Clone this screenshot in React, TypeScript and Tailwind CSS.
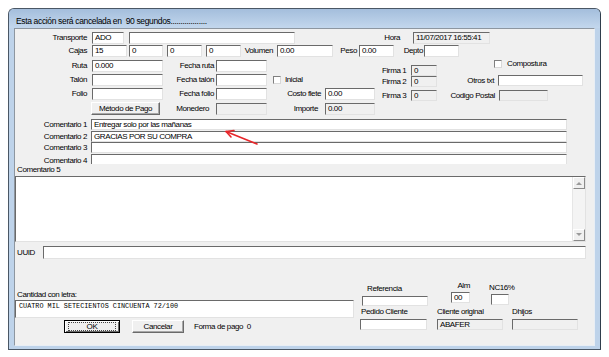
import React from "react";

const inpBase =
  "border border-t-[#6a6a6a] border-l-[#6a6a6a] border-r-[#e2e2e2] border-b-[#e2e2e2] flex items-center pl-[2px] overflow-hidden whitespace-nowrap shrink-0";

function Inp({ c, gray, children }: { c: string; gray?: boolean; children?: React.ReactNode }) {
  return <div className={`${inpBase} ${gray ? "bg-[#f0f0f0]" : "bg-white"} ${c}`}>{children}</div>;
}

function Lbl({ c, children }: { c: string; children?: React.ReactNode }) {
  return <div className={`flex items-center whitespace-nowrap shrink-0 ${c}`}>{children}</div>;
}

function Check({ c }: { c: string }) {
  return (
    <div
      className={`w-[8px] h-[8px] bg-white border border-t-[#808080] border-l-[#808080] border-r-[#d8d8d8] border-b-[#d8d8d8] shrink-0 ${c}`}
    />
  );
}

function Btn({ c, children, def }: { c: string; children: React.ReactNode; def?: boolean }) {
  if (def) {
    return (
      <div
        className={`relative border border-black bg-[#f0f0f0] shadow-[inset_1px_1px_0_#ffffff,inset_-1px_-1px_0_#6a6a6a] flex items-center justify-center shrink-0 ${c}`}
      >
        <div className="absolute top-[1px] bottom-[1px] left-[3px] right-[3px] border border-dotted border-[#444]" />
        <span className="relative">{children}</span>
      </div>
    );
  }
  return (
    <div
      className={`bg-[#f0f0f0] border border-t-white border-l-white border-r-[#6a6a6a] border-b-[#6a6a6a] shadow-[inset_-1px_-1px_0_#a8a8a8] flex items-center justify-center shrink-0 ${c}`}
    >
      {children}
    </div>
  );
}

function ScrollBtn({ up }: { up?: boolean }) {
  return (
    <div className="w-[12px] h-[12px] bg-[#f0f0f0] border border-t-white border-l-white border-r-[#8a8a8a] border-b-[#8a8a8a] flex items-center justify-center">
      <svg width="6" height="4" viewBox="0 0 6 4">
        {up ? <path d="M0 4 L3 1 L6 4 Z" fill="#9a9a9a" /> : <path d="M0 0 L3 3 L6 0 Z" fill="#9a9a9a" />}
      </svg>
    </div>
  );
}

export default function App() {
  return (
    <div className="relative w-[609px] h-[357px] bg-white overflow-hidden pt-[8px] pl-[8px] font-['Liberation_Sans',Arial,sans-serif] text-[8px] tracking-[-0.4px] leading-none text-black">
      {/* window */}
      <div className="w-[593px] h-[342px] flex flex-col rounded-t-[6px] border border-[#4a5765] border-r-[#2f3e4c] bg-[#bed3ea] overflow-hidden">
        {/* title */}
        <div className="h-[19px] shrink-0 bg-linear-to-b from-[#a4bedc] to-[#c3d7ed] flex items-end pl-[7px] pb-[3px] text-[8.5px] tracking-[-0.35px]">
          Esta acción será cancelada en&nbsp; 90 segundos..................
        </div>
        {/* frame body */}
        <div className="flex-1 px-[5px] pb-[3px] flex">
          <div className="w-[581px] h-[318px] bg-[#f0f0f0] border border-t-[#8d96a0] border-l-[#8d96a0] border-r-[#e8eef5] border-b-[#e8eef5] flex flex-col">
            {/* Row 1 */}
            <div className="mt-[3px] h-[12px] flex items-center">
              <Lbl c="w-[72px] justify-end">Transporte</Lbl>
              <Inp c="ml-[5px] w-[32px] h-[12px]">ADO</Inp>
              <Inp c="ml-[5px] w-[166px] h-[12px]" />
              <Lbl c="w-[105px] justify-end">Hora</Lbl>
              <Inp gray c="ml-[13px] w-[77px] h-[12px]">11/07/2017 16:55:41</Inp>
            </div>
            {/* Row 2 */}
            <div className="mt-[1px] h-[12px] flex items-center">
              <Lbl c="w-[72px] justify-end">Cajas</Lbl>
              <Inp c="ml-[5px] w-[35px] h-[12px]">15</Inp>
              <Inp c="ml-[2px] w-[34px] h-[12px]">0</Inp>
              <Inp c="ml-[4px] w-[35px] h-[12px]">0</Inp>
              <Inp c="ml-[4px] w-[35px] h-[12px]">0</Inp>
              <Lbl c="w-[32px] justify-end">Volumen</Lbl>
              <Inp c="ml-[4px] w-[56px] h-[12px]">0.00</Inp>
              <Lbl c="w-[24px] justify-end">Peso</Lbl>
              <Inp c="ml-[2px] w-[35px] h-[12px]">0.00</Inp>
              <Lbl c="w-[29px] justify-end">Depto</Lbl>
              <Inp c="ml-[1px] w-[35px] h-[12px]" />
            </div>
            {/* Middle section */}
            <div className="mt-[3px] flex items-start">
              <div className="flex flex-col w-[360px]">
                <div className="h-[12px] flex items-center">
                  <Lbl c="w-[72px] justify-end">Ruta</Lbl>
                  <Inp c="ml-[5px] w-[71px] h-[12px]">0.000</Inp>
                  <Lbl c="w-[51px] justify-end">Fecha ruta</Lbl>
                  <Inp c="ml-[2px] w-[51px] h-[12px]" />
                </div>
                <div className="mt-[2px] h-[12px] flex items-center">
                  <Lbl c="w-[72px] justify-end">Talón</Lbl>
                  <Inp c="ml-[5px] w-[71px] h-[12px]" />
                  <Lbl c="w-[51px] justify-end">Fecha talón</Lbl>
                  <Inp c="ml-[2px] w-[51px] h-[12px]" />
                  <Check c="ml-[6px]" />
                  <Lbl c="ml-[4px]">Inicial</Lbl>
                </div>
                <div className="mt-[2px] h-[12px] flex items-center">
                  <Lbl c="w-[72px] justify-end">Folio</Lbl>
                  <Inp c="ml-[5px] w-[71px] h-[12px]" />
                  <Lbl c="w-[51px] justify-end">Fecha folio</Lbl>
                  <Inp c="ml-[2px] w-[51px] h-[12px]" />
                  <Lbl c="w-[54px] justify-end">Costo flete</Lbl>
                  <Inp c="ml-[4px] w-[50px] h-[12px]">0.00</Inp>
                </div>
                <div className="mt-[2px] h-[13px] flex items-center">
                  <div className="w-[76px] shrink-0" />
                  <Btn c="w-[69px] h-[13px]">Método de Pago</Btn>
                  <Lbl c="w-[49px] justify-end">Monedero</Lbl>
                  <Inp gray c="ml-[7px] w-[51px] h-[12px]" />
                  <Lbl c="w-[51px] justify-end">Importe</Lbl>
                  <Inp gray c="ml-[7px] w-[50px] h-[12px]">0.00</Inp>
                </div>
              </div>
              {/* Firma block */}
              <div className="ml-[7px] mt-[5px] flex flex-col">
                <div className="h-[11px] flex items-center">
                  <Lbl c="w-[28px]">Firma 1</Lbl>
                  <Inp gray c="ml-[1px] w-[26px] h-[11px]">0</Inp>
                </div>
                <div className="h-[11px] flex items-center">
                  <Lbl c="w-[28px]">Firma 2</Lbl>
                  <Inp gray c="ml-[1px] w-[26px] h-[11px]">0</Inp>
                </div>
                <div className="mt-[3px] h-[11px] flex items-center">
                  <Lbl c="w-[28px]">Firma 3</Lbl>
                  <Inp gray c="ml-[1px] w-[26px] h-[11px]">0</Inp>
                </div>
              </div>
              {/* right block */}
              <div className="ml-[14px] flex flex-col">
                <div className="h-[8px] flex items-center">
                  <Check c="ml-[43px]" />
                  <Lbl c="ml-[5px]">Compostura</Lbl>
                </div>
                <div className="mt-[7px] h-[11px] flex items-center">
                  <Lbl c="w-[43px] justify-end">Otros txt</Lbl>
                  <Inp c="ml-[4px] w-[85px] h-[11px]" />
                </div>
                <div className="mt-[4px] h-[11px] flex items-center">
                  <Lbl c="w-[44px] justify-end">Codigo Postal</Lbl>
                  <Inp gray c="ml-[4px] w-[49px] h-[11px]" />
                </div>
              </div>
            </div>
            {/* Comentarios */}
            <div className="mt-[4px] h-[11px] flex items-center">
              <Lbl c="w-[72px] justify-end">Comentario 1</Lbl>
              <Inp c="ml-[4px] w-[476px] h-[11px]">Entregar solo por las mañanas</Inp>
            </div>
            <div className="mt-[1px] h-[11px] flex items-center">
              <Lbl c="w-[72px] justify-end">Comentario 2</Lbl>
              <Inp c="ml-[4px] w-[476px] h-[11px]">GRACIAS POR SU COMPRA</Inp>
            </div>
            <div className="h-[11px] flex items-center">
              <Lbl c="w-[72px] justify-end">Comentario 3</Lbl>
              <Inp c="ml-[4px] w-[476px] h-[11px]" />
            </div>
            <div className="mt-[1px] h-[10px] flex items-start overflow-hidden">
              <Lbl c="w-[72px] h-[11px] justify-end pt-[3px]">Comentario 4</Lbl>
              <Inp c="ml-[4px] w-[476px] h-[11px]" />
            </div>
            <div className="mt-[1px] h-[10px] flex items-center pl-[2px]">Comentario 5</div>
            {/* textarea */}
            <div className="mt-[1px] w-[571px] h-[66px] bg-white border border-t-[#6a6a6a] border-l-[#6a6a6a] border-r-[#e2e2e2] border-b-[#e2e2e2] flex justify-end">
              <div className="w-[13px] h-full bg-[#f4f4f4] border-l border-[#e6e6e6] flex flex-col justify-between">
                <ScrollBtn up />
                <ScrollBtn />
              </div>
            </div>
            {/* UUID */}
            <div className="mt-[4px] h-[13px] flex items-center">
              <Lbl c="w-[28px] pl-[2px]">UUID</Lbl>
              <Inp c="w-[543px] h-[13px]" />
            </div>
            {/* bottom */}
            <div className="mt-[22px] flex items-start">
              <div className="w-[339px] flex flex-col">
                <div className="mt-[9px] h-[10px] flex items-center pl-[2px]">Cantidad con letra:</div>
                <div className="w-[339px] h-[18px] bg-white border border-t-[#6a6a6a] border-l-[#6a6a6a] border-r-[#e2e2e2] border-b-[#e2e2e2] pl-[3px] pt-[2px] font-['Liberation_Mono',monospace] text-[6.8px] tracking-normal whitespace-nowrap">
                  CUATRO MIL SETECIENTOS CINCUENTA 72/100
                </div>
                <div className="mt-[2px] h-[13px] flex items-center">
                  <Btn def c="ml-[49px] w-[56px] h-[13px]">OK</Btn>
                  <Btn c="ml-[12px] w-[52px] h-[13px]">Cancelar</Btn>
                  <Lbl c="ml-[10px]">Forma de pago&nbsp; 0</Lbl>
                </div>
              </div>
              <div className="ml-[6px] flex flex-col">
                <div className="h-[25px] flex items-start">
                  <div className="w-[68px] flex flex-col">
                    <Lbl c="mt-[3px] h-[10px] pl-[7px]">Referencia</Lbl>
                    <Inp c="ml-[2px] mt-[2px] w-[66px] h-[10px]" />
                  </div>
                  <div className="ml-[23px] w-[19px] flex flex-col">
                    <Lbl c="h-[10px] justify-end">Alm</Lbl>
                    <Inp c="mt-[1px] w-[19px] h-[11px]">00</Inp>
                  </div>
                  <div className="ml-[19px] flex flex-col">
                    <Lbl c="mt-[2px] h-[10px]">NC16%</Lbl>
                    <Inp c="ml-[2px] mt-[1px] w-[18px] h-[11px]" />
                  </div>
                </div>
                <div className="mt-[1px] flex items-start">
                  <div className="w-[68px] flex flex-col">
                    <Lbl c="h-[10px] pl-[1px]">Pedido Cliente</Lbl>
                    <Inp c="mt-[2px] w-[67px] h-[11px]" />
                  </div>
                  <div className="ml-[9px] flex flex-col">
                    <Lbl c="h-[10px]">Cliente original</Lbl>
                    <Inp gray c="mt-[2px] w-[66px] h-[11px]">ABAFER</Inp>
                  </div>
                  <div className="ml-[9px] flex flex-col">
                    <Lbl c="h-[10px]">Dhijos</Lbl>
                    <Inp gray c="mt-[2px] w-[66px] h-[11px]" />
                  </div>
                </div>
              </div>
            </div>
          </div>
        </div>
      </div>
      {/* red arrow annotation */}
      <svg className="absolute left-[220px] top-[126px]" width="44" height="24" viewBox="0 0 44 24">
        <line x1="37" y1="18" x2="6" y2="5.5" stroke="#e8262a" strokeWidth="1.6" strokeLinecap="round" />
        <path d="M6 5.5 L14 4.5 M6 5.5 L11 11" stroke="#e8262a" strokeWidth="1.6" strokeLinecap="round" fill="none" />
      </svg>
    </div>
  );
}
